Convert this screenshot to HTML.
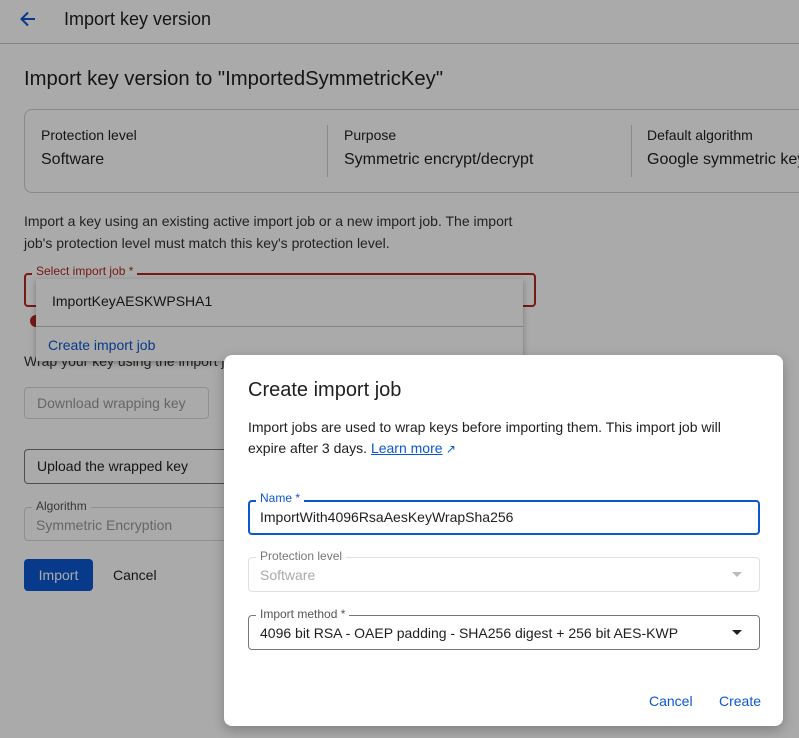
<!DOCTYPE html>
<html><head><style>
*{box-sizing:border-box;margin:0;padding:0}
body{width:799px;height:738px;overflow:hidden;background:#fff;font-family:"Liberation Sans",sans-serif;color:#1f1f1f;position:relative}
.a{position:absolute;white-space:nowrap}
.scrim{position:absolute;left:0;top:0;width:799px;height:738px;background:rgba(0,0,0,0.335)}
.lab{position:absolute;background:#fff;padding:0 4px;font-size:12px;line-height:14px}
</style></head><body>
<svg class="a" style="left:18px;top:9px" width="20" height="20" viewBox="0 0 20 20"><path d="M17 10H4M10 3.5L3.5 10 10 16.5" stroke="#0b57d0" stroke-width="2" fill="none"/></svg>
<div class="a" style="left:64px;top:9px;font-size:18px;color:#1f1f1f">Import key version</div>
<div class="a" style="left:0;top:43px;width:799px;height:1px;background:#c8c8c8"></div>
<div class="a" style="left:24px;top:68px;font-size:20.3px">Import key version to "ImportedSymmetricKey"</div>
<div class="a" style="left:24px;top:109px;width:800px;height:84px;border:1px solid #d0d0d0;border-radius:8px"></div>
<div class="a" style="left:41px;top:127px;font-size:14px">Protection level</div>
<div class="a" style="left:41px;top:151px;font-size:16px">Software</div>
<div class="a" style="left:327px;top:125px;width:1px;height:52px;background:#d0d0d0"></div>
<div class="a" style="left:344px;top:127px;font-size:14px">Purpose</div>
<div class="a" style="left:344px;top:151px;font-size:16px">Symmetric encrypt/decrypt</div>
<div class="a" style="left:631px;top:125px;width:1px;height:52px;background:#d0d0d0"></div>
<div class="a" style="left:647px;top:127px;font-size:14px">Default algorithm</div>
<div class="a" style="left:647px;top:151px;font-size:16px">Google symmetric key</div>
<div class="a" style="left:24px;top:210px;font-size:14px;line-height:22px;color:#333">Import a key using an existing active import job or a new import job. The import<br>job's protection level must match this key's protection level.</div>
<div class="a" style="left:24px;top:273px;width:512px;height:34px;border:2px solid #b3261e;border-radius:4px"></div>
<div class="lab" style="left:32px;top:264px;color:#b3261e">Select import job *</div>
<div class="a" style="left:30px;top:315px;width:12px;height:12px;border-radius:6px;background:#b3261e"></div>
<div class="a" style="left:24px;top:353px;font-size:14px;color:#333">Wrap your key using the import job</div>
<div class="a" style="left:36px;top:279px;width:487px;height:82px;background:#fff;box-shadow:0 2px 6px rgba(0,0,0,.3)">
<div class="a" style="left:16px;top:14px;font-size:14px">ImportKeyAESKWPSHA1</div>
<div class="a" style="left:0;top:47px;width:487px;height:1px;background:#c8c8c8"></div>
<div class="a" style="left:12px;top:58px;font-size:14px;color:#0b57d0">Create import job</div>
</div>
<div class="a" style="left:24px;top:387px;width:185px;height:32px;border:1px solid #d8d8d8;border-radius:4px;font-size:14px;color:#9a9a9a;line-height:30px;padding-left:12px">Download wrapping key</div>
<div class="a" style="left:24px;top:449px;width:220px;height:35px;border:1px solid #777;border-radius:4px;font-size:14px;line-height:33px;padding-left:12px">Upload the wrapped key</div>
<div class="a" style="left:24px;top:507px;width:220px;height:34px;border:1px solid #d8d8d8;border-radius:4px"></div>
<div class="lab" style="left:32px;top:499px;color:#555">Algorithm</div>
<div class="a" style="left:36px;top:517px;font-size:14px;color:#999">Symmetric Encryption</div>
<div class="a" style="left:24px;top:559px;width:69px;height:32px;background:#0b57d0;border-radius:4px;color:#fff;font-size:14px;line-height:32px;text-align:center">Import</div>
<div class="a" style="left:113px;top:567px;font-size:14px">Cancel</div>
<div class="scrim"></div>
<div class="a" style="left:224px;top:355px;width:559px;height:371px;background:#fff;border-radius:8px;box-shadow:0 4px 12px rgba(0,0,0,.25)">
<div class="a" style="left:24px;top:24px;font-size:20px">Create import job</div>
<div class="a" style="left:24px;top:62px;font-size:14px;line-height:21px">Import jobs are used to wrap keys before importing them. This import job will<br>expire after 3 days. <span style="color:#0b57d0;text-decoration:underline">Learn more</span><span style="color:#0b57d0;font-size:12px"> ↗</span></div>
<div class="a" style="left:24px;top:145px;width:512px;height:35px;border:2px solid #0b57d0;border-radius:4px"></div>
<div class="lab" style="left:32px;top:136px;color:#0b57d0">Name *</div>
<div class="a" style="left:36px;top:154px;font-size:14px">ImportWith4096RsaAesKeyWrapSha256</div>
<div class="a" style="left:24px;top:202px;width:512px;height:35px;border:1px solid #e0e0e0;border-radius:4px"></div>
<div class="lab" style="left:32px;top:194px;color:#777">Protection level</div>
<div class="a" style="left:36px;top:212px;font-size:14px;color:#aaa">Software</div>
<div class="a" style="left:508px;top:217px;border-left:5px solid transparent;border-right:5px solid transparent;border-top:5px solid #bbb"></div>
<div class="a" style="left:24px;top:260px;width:512px;height:35px;border:1px solid #777;border-radius:4px"></div>
<div class="lab" style="left:32px;top:252px;color:#555">Import method *</div>
<div class="a" style="left:36px;top:270px;font-size:14px">4096 bit RSA - OAEP padding - SHA256 digest + 256 bit AES-KWP</div>
<div class="a" style="left:508px;top:275px;border-left:5px solid transparent;border-right:5px solid transparent;border-top:5px solid #1f1f1f"></div>
<div class="a" style="left:425px;top:338px;font-size:14px;color:#0b57d0">Cancel</div>
<div class="a" style="left:495px;top:338px;font-size:14px;color:#0b57d0">Create</div>
</div>
</body></html>
